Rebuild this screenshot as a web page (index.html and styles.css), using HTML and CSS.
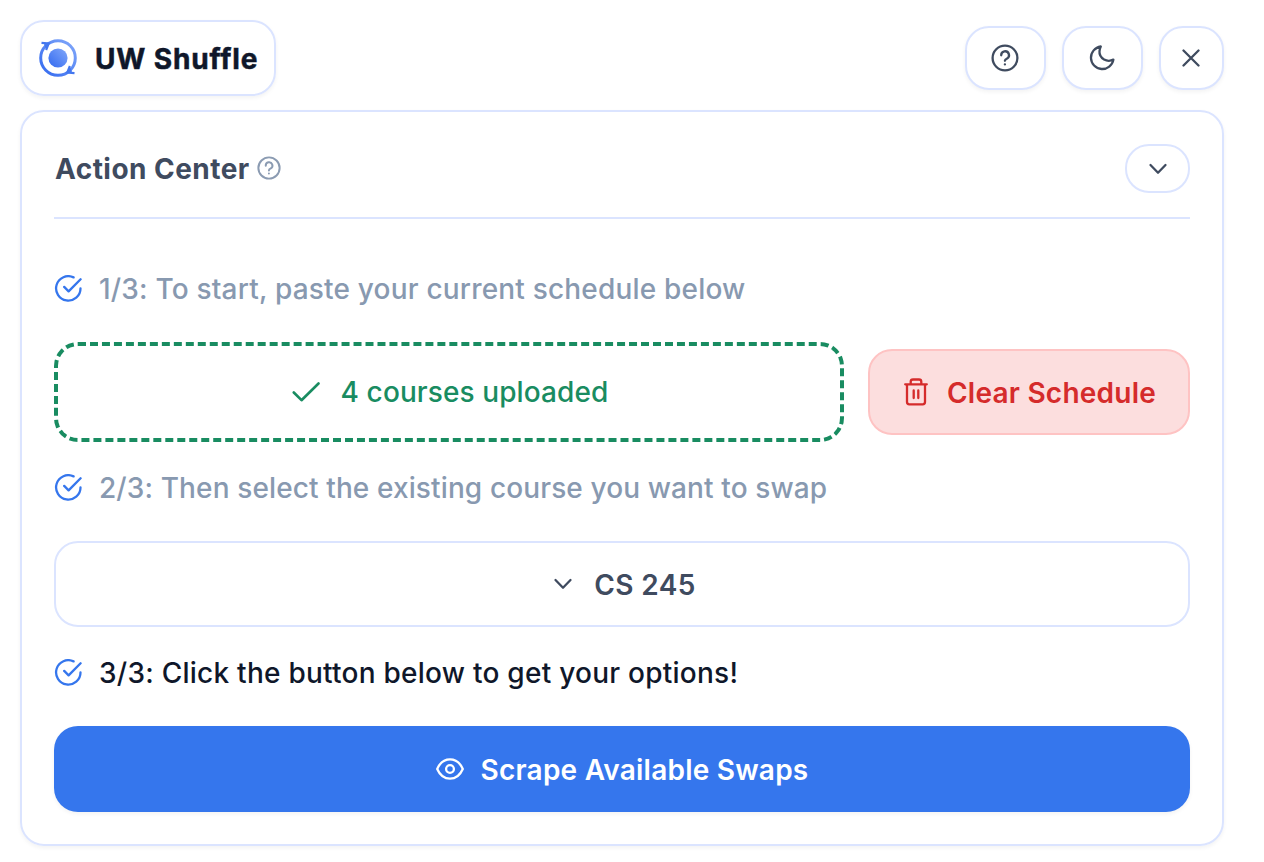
FILE: index.html
```html
<!DOCTYPE html>
<html lang="en">
<head>
<meta charset="utf-8">
<title>UW Shuffle</title>
<link rel="stylesheet" href="styles.css">
</head>
<body>
<svg width="0" height="0" class="defs">
  <symbol id="help" viewBox="0 0 28 28"><circle cx="14" cy="14" r="12.4"/><path d="M10.200 11.300a3.900 3.900 0 1 1 5.900 3.200q-2.200 1-2.200 2.300M13.900 20.300v.1"/></symbol>
  <symbol id="done" viewBox="0 0 28 28"><path d="M19.600 2.400A12.200 12.200 0 1 0 26.500 13.400M10.200 11.900l4.400 4.500L26.600 4.200"/></symbol>
  <symbol id="chevron" viewBox="0 0 20 12"><path d="M2.500 2l7.500 7.700L17.500 2"/></symbol>
</svg>
<header class="header">
  <div class="brand">
    <svg class="logo" viewBox="0 0 40 40">
      <defs><linearGradient id="blue" x1="0" y1="1" x2="1" y2="0"><stop offset="0" stop-color="#3269ef"/><stop offset="1" stop-color="#82a8fa"/></linearGradient></defs>
      <circle cx="20" cy="20" r="9.600" fill="url(#blue)"/>
      <circle cx="20" cy="20" r="17.300" fill="none" stroke="url(#blue)" stroke-width="3"/>
      <path d="M3.500 4.800l7.200.6-2.600 6.600M36.500 35.200l-7.200-.6 2.600-6.600" fill="none" stroke="#4377ef" stroke-width="2.200"/>
      <path d="M6 6l5 .5-3 4.500ZM34 34l-5-.5 3-4.500Z" fill="#4377ef"/>
    </svg>
    <h1 class="brand-name">UW Shuffle</h1>
  </div>
  <nav class="tools">
    <button class="tool" aria-label="Help"><svg class="icon i-help"><use href="#help"/></svg></button>
    <button class="tool" aria-label="Dark mode"><svg class="icon i-moon" viewBox="0 0 26 26"><path d="M11.800 1.500A11.300 11.300 0 1 0 24.400 14.600Q19.800 17.200 15.100 14.600Q10 11.500 10.500 6.200Q10.700 3.600 11.800 1.500Z"/></svg></button>
    <button class="tool tool-close" aria-label="Close"><svg class="icon i-close" viewBox="0 0 18 18"><path d="M1.500 1.500l15 15M16.500 1.500l-15 15"/></svg></button>
  </nav>
</header>
<main class="panel">
  <div class="panel-head">
    <h2 class="title">Action Center</h2>
    <svg class="icon i-hint"><use href="#help"/></svg>
    <button class="collapse" aria-label="Collapse"><svg class="icon i-chevron"><use href="#chevron"/></svg></button>
  </div>
  <div class="step step-1"><svg class="icon i-done"><use href="#done"/></svg><span class="s1">1/3: To start, paste your current schedule below</span></div>
  <div class="upload-row">
    <div class="upload"><svg class="icon i-check" viewBox="0 0 28 20"><path d="M1.800 10.500l7.700 7.700L26.500 1.500"/></svg><span class="t-upload">4 courses uploaded</span></div>
    <button class="clear"><svg class="icon i-trash" viewBox="0 0 24 28"><path d="M1.200 6.300h21.600M6.700 6V3.800q0-2.300 2.300-2.300h6q2.300 0 2.300 2.300V6M3 6.500V24q0 2.300 2.300 2.300h13.400q2.300 0 2.300-2.300V6.500M9.700 12.500v7.500M14.300 12.500v7.500"/></svg><span class="t-clear">Clear Schedule</span></button>
  </div>
  <div class="step step-2"><svg class="icon i-done"><use href="#done"/></svg><span class="s2">2/3: Then select the existing course you want to swap</span></div>
  <button class="select"><svg class="icon i-chevron"><use href="#chevron"/></svg><span class="t-course">CS 245</span></button>
  <div class="step step-3"><svg class="icon i-done"><use href="#done"/></svg><span class="s3">3/3: Click the button below to get your options!</span></div>
  <button class="scrape"><svg class="icon i-eye" viewBox="0 0 28 22"><path d="M1.200 11C4 4.600 8.700 1.300 14 1.300S24 4.600 26.800 11C24 17.400 19.300 20.700 14 20.700S4 17.400 1.200 11Z"/><circle cx="14" cy="11" r="3.900"/></svg><span class="t-scrape">Scrape Available Swaps</span></button>
</main>
</body>
</html>
```
FILE: styles.css
```css
* { box-sizing: border-box; }
body {
  margin: 0;
  padding: 20px 40px 16px 20px;
  height: 862px;
  background: #fff;
  color: #0f172a;
  font: 500 28px/36px Inter, "Liberation Sans", sans-serif;
  white-space: nowrap;
}
h1, h2 { margin: 0; font: inherit; }
button { padding: 0; font: inherit; color: inherit; background: #fff; }
.defs { position: absolute; }
.icon { display: block; flex: none; fill: none; stroke: currentColor; stroke-width: 2.300; stroke-linecap: round; stroke-linejoin: round; }

.header { display: flex; align-items: center; justify-content: space-between; height: 76px; margin-bottom: 14px; }
.brand, .tool, .panel { border: 2px solid #dbe4ff; border-radius: 24px; box-shadow: 0 2px 4px rgba(0, 0, 0, .05); }
.brand { display: flex; align-items: center; gap: 17px; width: 256px; height: 76px; padding-left: 16px; }
.logo { width: 40px; height: 40px; flex: none; }
.brand-name { padding-top: 2px; font-weight: 700; letter-spacing: .85px; -webkit-text-stroke: .5px currentColor; }
.tools { display: flex; gap: 16px; color: #3f4b5f; }
.tool { display: flex; align-items: center; justify-content: center; width: 81px; height: 64px; padding-right: 1px; }
.tool-close { width: 65px; }
.i-help { width: 28px; height: 28px; }
.i-moon { width: 26px; height: 26px; }
.i-close { width: 18px; height: 18px; }

.panel { height: 736px; padding: 32px; }
.panel-head { display: flex; align-items: center; height: 75px; padding-bottom: 24px; border-bottom: 2px solid #dbe4ff; color: #3f4b5f; }
.title { width: 195px; padding-left: 1px; font-weight: 650; letter-spacing: .46px; }
.i-hint { width: 24px; height: 24px; margin: 0 0 1px 8px; color: #8b9bb2; }
.collapse { display: flex; align-items: center; justify-content: center; width: 65px; height: 49px; margin-left: auto; border: 2px solid #dbe4ff; border-radius: 24px; }
.i-chevron { width: 20px; height: 12px; }

.step { display: flex; align-items: center; height: 36px; gap: 17px; color: #8899b0; font-weight: 450; }
.i-done { width: 28px; height: 28px; color: #3576ed; }
.step-1 { margin-top: 52px; }
.step-2 { margin-top: 28px; }
.step-3 { margin-top: 28px; color: #0f172a; }
.s1 { letter-spacing: .19px; }
.s2 { letter-spacing: .12px; }
.s3 { letter-spacing: .25px; }
.upload-row { display: flex; align-items: center; gap: 24px; height: 100px; margin-top: 35px; }
.upload { display: flex; align-items: center; justify-content: center; gap: 21px; width: 790px; height: 100px; padding-left: 2px; border: 4px dashed #198c61; border-radius: 24px; color: #198c61; }
.i-check { width: 28px; height: 20px; margin-bottom: 1px; stroke-width: 2.600; }
.t-upload { letter-spacing: .1px; }
.clear { display: flex; align-items: center; justify-content: center; gap: 19px; width: 322px; height: 86px; padding-left: 2px; border: 2px solid #fec3c3; border-radius: 24px; background: #fcdede; color: #d52b2b; font-weight: 600; }
.i-trash { width: 24px; height: 28px; margin-bottom: 1px; }
.t-clear { padding-top: 2px; letter-spacing: .23px; }
.select, .scrape { display: flex; align-items: center; justify-content: center; width: 100%; height: 86px; border: 2px solid #dbe4ff; border-radius: 24px; }
.select { gap: 21px; padding-left: 5px; margin-top: 35px; color: #3f4b5f; font-weight: 600; }
.t-course { padding-top: 2px; letter-spacing: .4px; }
.scrape { gap: 17px; margin-top: 35px; border: 0; background: #3576ed; color: #fff; font-weight: 600; box-shadow: 0 2px 4px rgba(0, 0, 0, .05); }
.i-eye { width: 28px; height: 22px; }
.t-scrape { padding-top: 2px; letter-spacing: .22px; }
```
